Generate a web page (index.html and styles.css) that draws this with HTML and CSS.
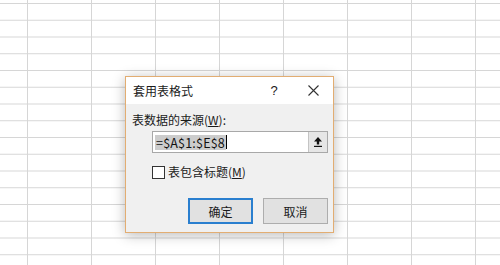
FILE: index.html
```html
<!DOCTYPE html>
<html lang="zh-CN">
<head>
    <meta charset="UTF-8">
    <meta name="viewport" content="width=device-width, initial-scale=1.0">
    <title>套用表格式</title>
    <link rel="stylesheet" href="styles.css">
</head>
<body>
    <div class="sheet">
        <div class="dialog">
            <div class="titlebar">
                <span class="title">套用表格式</span>
                <span class="help">?</span>
                <span class="close">
                    <svg width="11" height="11" viewBox="0 0 11 11">
                        <path d="M0.5 0.5 L10.5 10.5 M10.5 0.5 L0.5 10.5" stroke="#333" stroke-width="1.1" fill="none"/>
                    </svg>
                </span>
            </div>
            <div class="content">
                <div class="label">表数据的来源(<u>W</u>):</div>
                <div class="range">
                    <div class="range-field"><span class="selected">=$A$1:$E$8</span><span class="caret"></span></div>
                    <div class="range-btn">
                        <svg width="8" height="10" viewBox="0 0 8 10">
                            <path d="M4 0 L8 4.5 L5.2 4.5 L5.2 7.5 L2.8 7.5 L2.8 4.5 L0 4.5 Z" fill="#111"/>
                            <rect x="0" y="8.8" width="8" height="1.2" fill="#111"/>
                        </svg>
                    </div>
                </div>
                <label class="check-row">
                    <span class="checkbox"></span>
                    <span>表包含标题(<u>M</u>)</span>
                </label>
                <div class="buttons">
                    <button class="btn btn-default">确定</button>
                    <button class="btn">取消</button>
                </div>
            </div>
        </div>
    </div>
</body>
</html>
```

FILE: styles.css
```css
html, body {
    margin: 0;
    height: 100%;
}
body {
    font-family: "Noto Sans CJK SC", "Liberation Sans", sans-serif;
    font-size: 12px;
    color: #1a1a1a;
    background-color: #fff;
    background-image:
        linear-gradient(to right, #d6d6d6 1px, transparent 1px),
        linear-gradient(to bottom, #d6d6d6 1px, transparent 1px);
    background-size: 64px 16.75px;
    background-position: 27px 3px;
}
.sheet {
    padding: 76px 0 0 125px;
}
.dialog {
    width: 207px;
    border: 1px solid #e2ad72;
    box-shadow: 0 2px 12px rgba(0,0,0,0.28);
    background: #f0f0f0;
}
.titlebar {
    height: 27px;
    background: #fff;
    display: flex;
    align-items: center;
    padding-left: 7px;
}
.title {
    flex: 1;
    line-height: 14px;
}
.help {
    width: 14px;
    text-align: center;
    font-family: "Liberation Sans", sans-serif;
    font-size: 13px;
    margin-right: 27px;
}
.close {
    width: 11px;
    height: 11px;
    margin-right: 14px;
    display: flex;
}
.content {
    padding: 8px 5px 8px 6px;
}
.label {
    line-height: 15px;
}
.label u, .check-row u {
    text-decoration-thickness: 1px;
    text-underline-offset: 1px;
}
.range {
    display: flex;
    margin: 4px 0 0 20px;
    height: 22px;
    border: 1px solid #a8a8a8;
    box-sizing: border-box;
    background: #fff;
}
.range-field {
    flex: 1;
    display: flex;
    align-items: center;
    padding-left: 2px;
}
.selected {
    background: #cccccc;
    color: #111;
    font-size: 12.5px;
    line-height: 15px;
    padding: 0 1px;
    letter-spacing: 0.2px;
}
.caret {
    width: 1px;
    height: 14px;
    background: #000;
}
.range-btn {
    width: 18px;
    background: #e6e6e6;
    border-left: 1px solid #c4c4c4;
    display: flex;
    align-items: center;
    justify-content: center;
}
.check-row {
    display: flex;
    align-items: center;
    margin: 12px 0 0 20px;
    line-height: 14px;
}
.checkbox {
    width: 11px;
    height: 11px;
    border: 1px solid #333;
    background: #fff;
    margin-right: 3px;
}
.buttons {
    display: flex;
    justify-content: flex-end;
    gap: 10px;
    margin-top: 19px;
}
.btn {
    width: 65px;
    height: 26px;
    border: 1px solid #adadad;
    background: #e1e1e1;
    font-family: inherit;
    font-size: 12px;
    color: #1a1a1a;
    padding: 0;
}
.btn-default {
    border: 2px solid #2a7fcf;
}
```
